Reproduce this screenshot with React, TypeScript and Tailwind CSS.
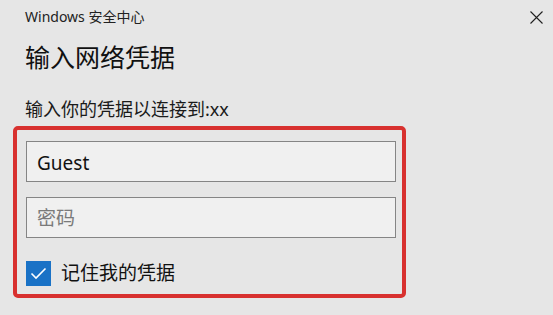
import React from "react";

export default function App() {
  const font = { fontFamily: '"Noto Sans", "Noto Sans CJK SC", sans-serif' };
  return (
    <div
      className="relative w-[553px] h-[315px] bg-[#e6e6e6] text-[#1a1a1a] overflow-hidden"
      style={font}
    >
      <button className="absolute left-[528px] top-[9px] w-[16px] h-[16px] flex items-center justify-center">
        <svg width="13" height="13" viewBox="0 0 13 13">
          <path d="M0.5 0.5 L12.5 12.5 M12.5 0.5 L0.5 12.5" stroke="#1f1f1f" strokeWidth="1.1" fill="none" />
        </svg>
      </button>
      <div className="flex flex-col pl-[25px]">
        <div className="mt-[7px] h-[20px] leading-[20px] text-[14px] text-[#222]">Windows 安全中心</div>
        <div className="mt-[13px] h-[34px] leading-[34px] text-[25px] text-[#111]">输入网络凭据</div>
        <div className="mt-[22px] h-[26px] leading-[26px] text-[18px] text-[#1a1a1a]">输入你的凭据以连接到:xx</div>
      </div>
      <div className="ml-[13px] mt-[4px] w-[393px] h-[172px] border-[4px] border-[#d8312f] rounded-[5px] pl-[9px] pr-[6px] pt-[11px] flex flex-col">
        <div className="w-[370px] h-[41px] border border-[#858585] bg-[#f0f0f0] flex items-center pl-[10px] pt-[3px] text-[19px] text-[#111]">
          Guest
        </div>
        <div className="mt-[15px] w-[370px] h-[41px] border border-[#858585] bg-[#f0f0f0] flex items-center pl-[10px] pt-[2px] text-[19px] text-[#7a7a7a]">
          密码
        </div>
        <div className="mt-[22px] flex items-center gap-[10px]">
          <div className="w-[25px] h-[25px] bg-[#1a72c6] flex items-center justify-center">
            <svg width="17" height="13" viewBox="0 0 17 13">
              <path d="M1.5 6.5 L6 11 L15.5 1.5" stroke="#ffffff" strokeWidth="1.6" fill="none" />
            </svg>
          </div>
          <span className="text-[19px] leading-[26px] text-[#111]">记住我的凭据</span>
        </div>
      </div>
    </div>
  );
}
